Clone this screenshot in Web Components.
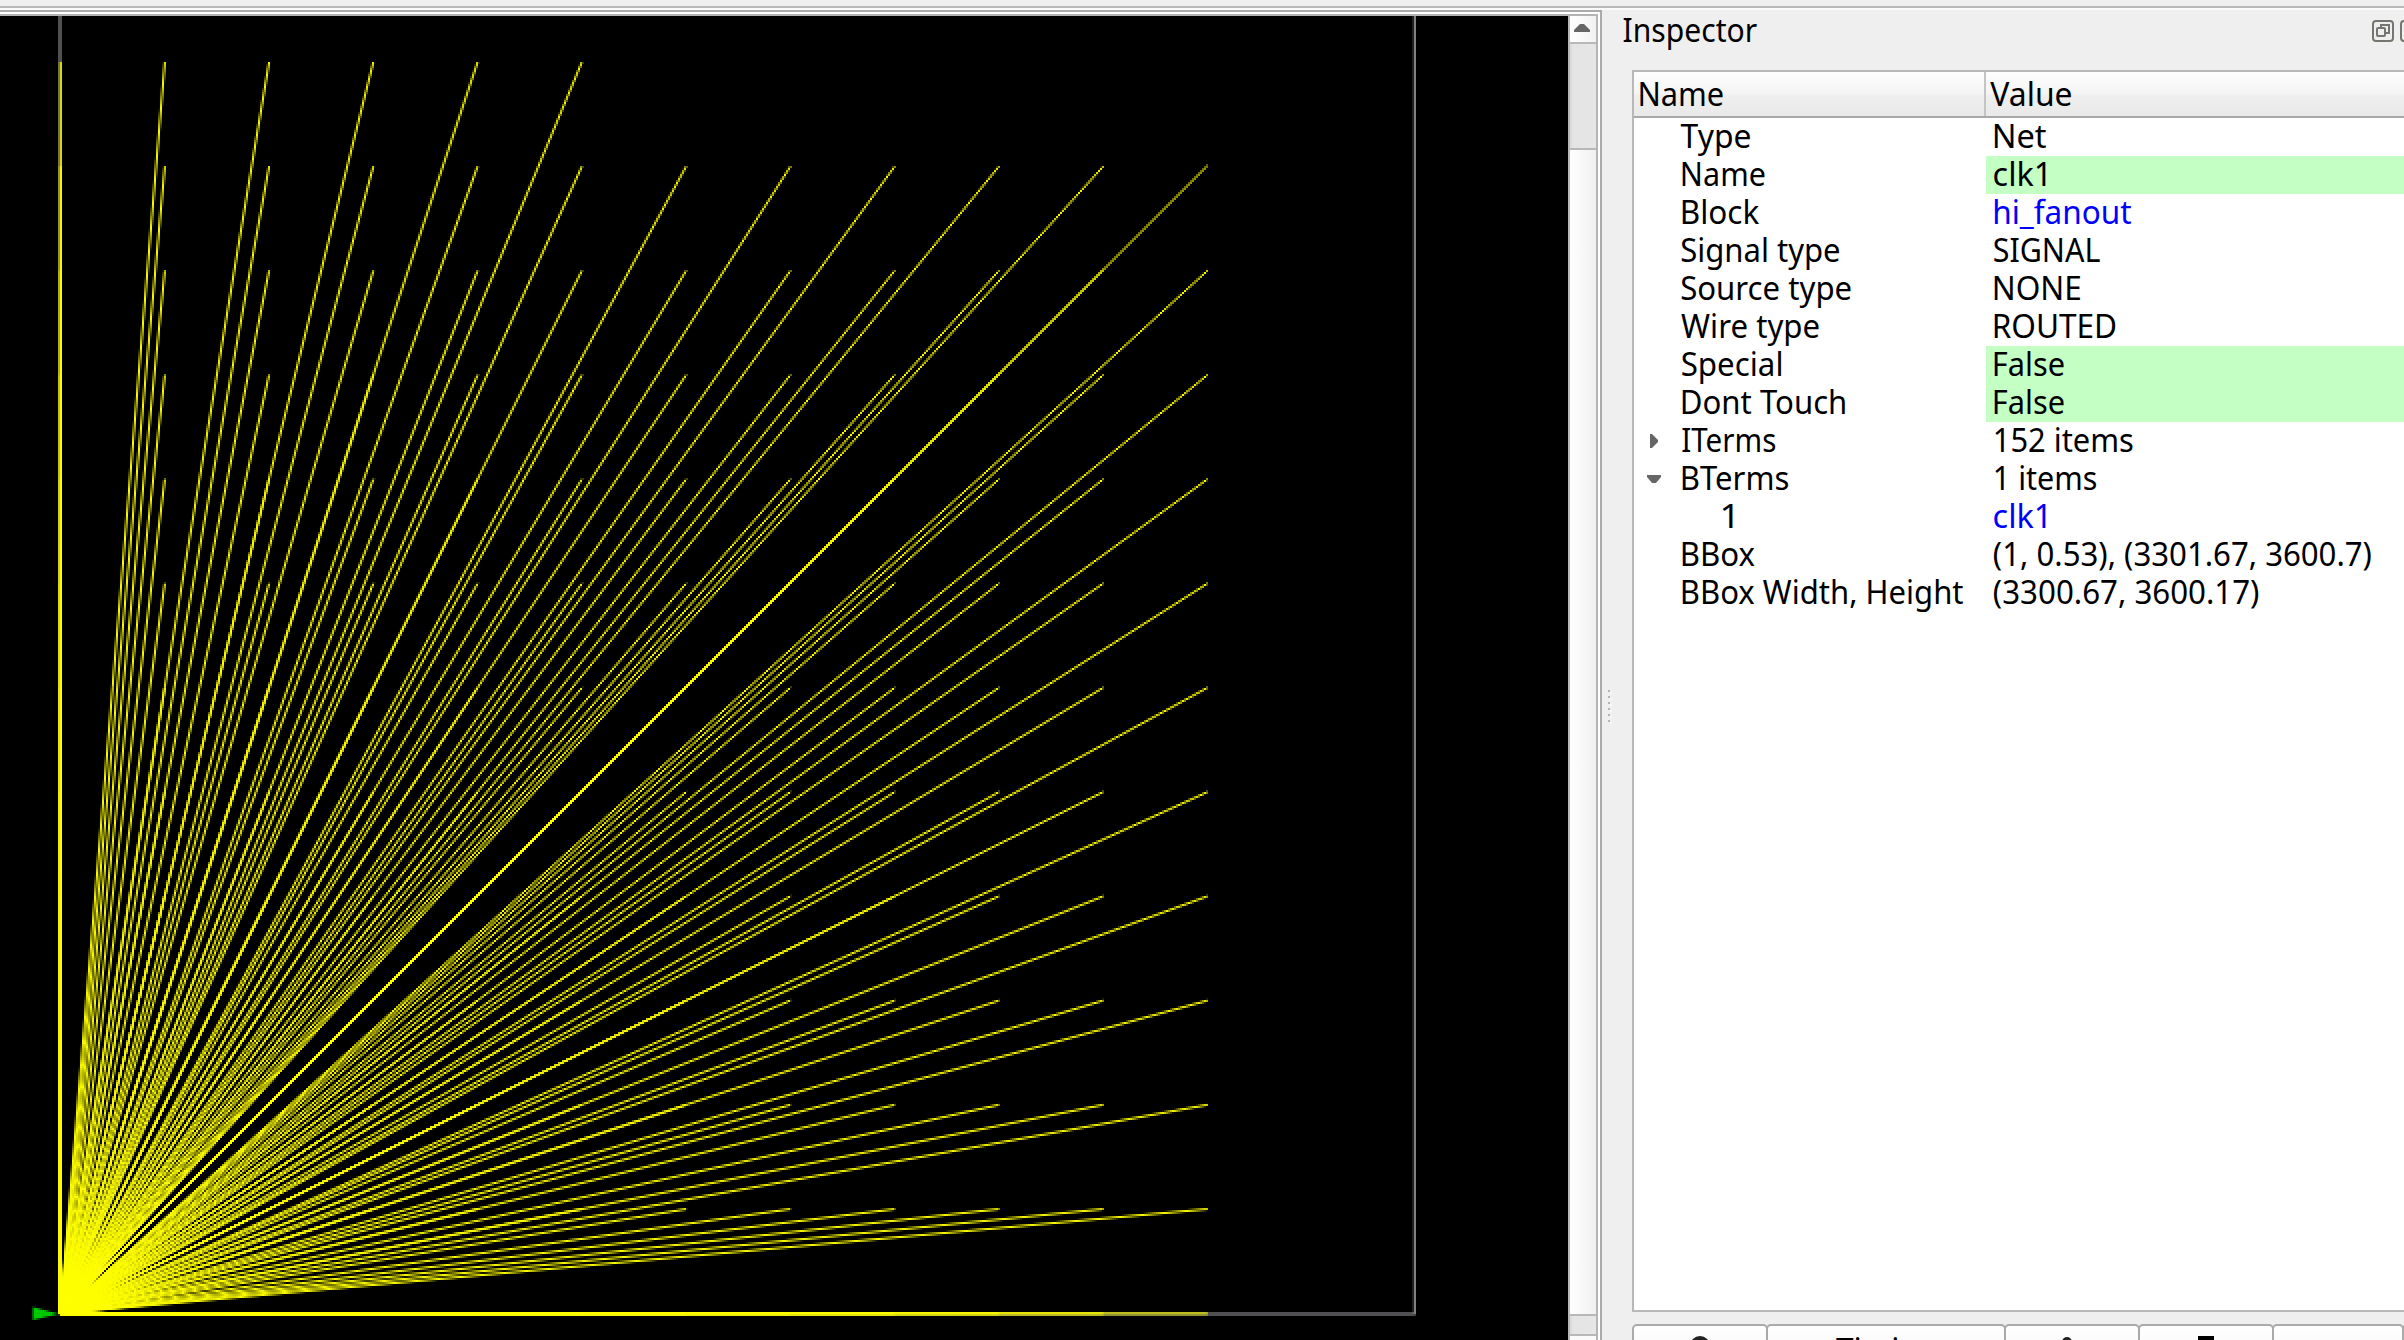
<!DOCTYPE html>
<html lang="en">
<head>
<meta charset="utf-8">
<title>Inspector</title>
<style>
html,body{margin:0;width:2404px;height:1340px;overflow:hidden;background:#efefef;font-family:"Noto Sans","Open Sans",sans-serif}
</style>
</head>
<body>
<app-window></app-window>
<script>
const define = (name, html, setup) => customElements.define(name, class extends HTMLElement {
  connectedCallback() {
    if (this.shadowRoot) return;
    this.attachShadow({ mode: 'open' }).innerHTML = html;
    if (setup) setup(this, this.shadowRoot);
  }
});

// A label condensed to the ink width w, its ink starting dx from the box's left edge.
const meter = document.createElement('canvas').getContext('2d');
define('fit-label', `<style>
:host{display:block;font-size:33px;line-height:36px;height:38px;white-space:pre;color:#000}
span{display:inline-block;transform-origin:0 0}
</style><span></span>`, (el, root) => {
  const span = root.querySelector('span');
  const text = el.getAttribute('text');
  span.textContent = text;
  meter.font = '33px "Noto Sans"';
  const m = meter.measureText(text);
  const s = +el.getAttribute('w') / (m.actualBoundingBoxLeft + m.actualBoundingBoxRight);
  const dx = +(el.getAttribute('dx') || 0) + m.actualBoundingBoxLeft * s;
  span.style.transform = `translateX(${dx}px) scaleX(${s})`;
});

define('layout-canvas', `<style>
:host{display:block;width:1568px;height:1324px;background:#000}
canvas{display:block;width:1568px;height:1324px;image-rendering:pixelated}
</style><canvas width="784" height="662"></canvas>`, (el, root) => {
  const c = root.querySelector('canvas').getContext('2d');
  const k = 0.1738, X = u => 30 + u * k, Y = v => 649 - v * k;
  c.fillStyle = '#000';
  c.fillRect(0, 0, 784, 662);
  c.lineWidth = 1;
  c.strokeStyle = '#a0a0a4';
  c.strokeRect(X(0), -20, X(3897) - X(0), Y(0) + 20);
  c.fillStyle = '#00c800';
  c.beginPath(); c.moveTo(16.5, 645.4); c.lineTo(29.5, 649); c.lineTo(16.5, 652); c.fill();
  c.strokeStyle = '#ff0';
  for (let j = 0; j <= 12; j++)
    for (let i = 0; i < (j === 12 ? 6 : 12); i++) {
      const lift = j === 0 ? 0 : i === j ? 0.6 : 0.2;
      c.beginPath();
      c.moveTo(X(1), Y(0.53) - lift);
      c.lineTo(X(1.67 + 300 * i), Y(0.7 + 300 * j) - lift);
      c.stroke();
    }
});

define('scroll-bar', `<style>
:host{display:flex;flex-direction:column;width:26px;height:1324px;border-left:2px solid #b8b8b8;border-right:2px solid #b4b4b4;background:#e4e4e4}
.up{height:26px;border-bottom:2px solid #b8b8b8;background:linear-gradient(90deg,#fff,#f2f2f2)}
.up svg{display:block}
.groove{height:104px;background:linear-gradient(90deg,#d8d8d8,#e4e4e4 3px,#e6e6e6)}
.handle{height:1164px;border-top:2px solid #b8b8b8;border-bottom:2px solid #b8b8b8;background:linear-gradient(90deg,#fff,#f0f0f0)}
.tail{height:18px;background:linear-gradient(90deg,#d8d8d8,#e4e4e4 3px,#e6e6e6)}
.down{flex:1;border-top:2px solid #b8b8b8;background:#fafafa}
</style><div class="up"><svg width="26" height="26"><path d="M4 16V14L10 8H14L20 14V16Z" fill="#666"/></svg></div><div class="groove"></div><div class="handle"></div><div class="tail"></div><div class="down"></div>`);

define('layout-view', `<style>
:host{display:flex;flex-direction:column;width:1602px;height:1330px}
.outer{border-top:2px solid #aaa;border-right:2px solid #aaa;padding:2px 2px 0 0;background:#fff}
.inner{border-top:2px solid #b4b4b4;display:flex}
</style><div class="outer"><div class="inner"><layout-canvas></layout-canvas><scroll-bar></scroll-bar></div></div>`);

define('split-handle', `<style>
:host{display:flex;flex-direction:column;justify-content:flex-start;gap:4px;box-sizing:border-box;width:18px;padding:680px 0 0 6px;height:1330px}
i{display:block;width:2px;height:2px;background:#b4b4b4;box-shadow:2px 2px #f8f8f8}
</style><i></i><i></i><i></i><i></i><i></i><i></i>`);

define('tree-row', `<style>
:host{display:flex;height:38px}
.n{display:flex;width:352px;height:38px}
.a{width:46px;height:38px}.a svg{display:block}
.v{flex:1;height:38px}
.v.edit{background:#c4ffc4}
</style><div class="n"><div class="a"></div><fit-label></fit-label></div><div class="v"><fit-label></fit-label></div>`, (el, root) => {
  const [n, nl, nr, v, vl, vr, kind, arrow] = el.data;
  const a = root.querySelector('.a');
  if (arrow) a.innerHTML = `<svg width="46" height="38"><path d="${arrow === 'open' ? 'M13 15H27V17L22 23H18L13 17Z' : 'M16 12H18L24 18V20L18 26H16Z'}" fill="#666"/></svg>`;
  const put = (box, text, l, r, base, color) => {
    const f = document.createElement('fit-label');
    f.setAttribute('text', text); f.setAttribute('dx', l - base); f.setAttribute('w', r - l);
    if (color) f.style.color = color;
    box.querySelector('fit-label').replaceWith(f);
  };
  put(root.querySelector('.n'), n, nl, nr, 1679.4);
  put(root.querySelector('.v'), v, vl, vr, 1985.4, kind === 'link' ? '#00f' : '');
  if (kind === 'edit') root.querySelector('.v').classList.add('edit');
});

const rows = [
  ['Type', 1680, 1749.3, 'Net', 1994, 2046],
  ['Name', 1682, 1763.8, 'clk1', 1993, 2045, 'edit'],
  ['Block', 1682, 1759, 'hi_fanout', 1993.5, 2131, 'link'],
  ['Signal type', 1680.5, 1838.5, 'SIGNAL', 1993, 2099.5],
  ['Source type', 1680.5, 1850, 'NONE', 1994, 2080],
  ['Wire type', 1680.5, 1818, 'ROUTED', 1994, 2115.5],
  ['Special', 1681, 1780.5, 'False', 1994, 2063, 'edit'],
  ['Dont Touch', 1682, 1844.5, 'False', 1994, 2063, 'edit'],
  ['ITerms', 1681.5, 1775, '152 items', 1994, 2132.5, '', 'closed'],
  ['BTerms', 1682, 1788, '1 items', 1994, 2096, '', 'open'],
  ['1', 1721, 1732, 'clk1', 1993, 2045, 'link'],
  ['BBox', 1682, 1754, '(1, 0.53), (3301.67, 3600.7)', 1993.2, 2370.5],
  ['BBox Width, Height', 1682, 1963, '(3300.67, 3600.17)', 1993.2, 2258]
];

define('property-tree', `<style>
:host{display:block;height:1238px;flex:none;margin-left:12px;border:2px solid #b8b8b8;border-right:0;background:#fff}
.head{display:flex;height:44px;border-bottom:2px solid #a8a8a8;background:linear-gradient(#fefefe,#f4f4f4 50%,#efefef 52%,#e9e9e9)}
.head div{padding-top:4px;box-sizing:border-box;height:44px}
.head .name{box-sizing:content-box;height:40px;width:350px;border-right:2px solid #c4c4c4}
</style><div class="head"><div class="name"><fit-label text="Name" dx="6.2" w="82.5"></fit-label></div><div><fit-label text="Value" dx="4.3" w="80.7"></fit-label></div></div><section></section>`, (el, root) => {
  for (const r of rows) {
    const row = document.createElement('tree-row');
    row.data = r;
    root.querySelector('section').append(row);
  }
});

define('dock-title', `<style>
:host{display:flex;justify-content:space-between;height:60px;flex:none}
fit-label{margin-top:2px}
svg{display:block;margin-top:8px}
</style><fit-label text="Inspector" dx="3.5" w="134"></fit-label><svg width="34" height="26" fill="none" stroke="#77756f" stroke-width="2"><rect x="3" y="3" width="20" height="20" rx="3"/><path d="M11 10V7H19V15H16"/><rect x="7" y="10" width="8" height="8" rx="1"/><path d="M40 3H34Q31 3 31 6V20Q31 23 34 23H40"/></svg>`);

define('tool-button', `<style>
:host{display:block;box-sizing:border-box;height:40px;flex:none;border:2px solid #aaa;border-radius:5px 5px 0 0;background:linear-gradient(#fff,#f6f6f6);margin-right:-2px}
</style><slot></slot>`);

define('action-bar', `<style>
:host{display:flex;height:16px;overflow:hidden;padding-top:12px;margin-left:12px}
svg{display:block}
fit-label{margin-top:6px}
</style>
<tool-button style="width:136px"><svg width="132" height="30"><circle cx="66" cy="20" r="8" fill="#eee" stroke="#222" stroke-width="4"/></svg></tool-button>
<tool-button style="width:240px"><fit-label text="Timing" dx="68" w="100"></fit-label></tool-button>
<tool-button style="width:136px"><svg width="132" height="30"><circle cx="61" cy="16" r="5" fill="#222"/></svg></tool-button>
<tool-button style="width:136px"><svg width="132" height="30"><path d="M58 10H74V30H58Z" fill="#000"/></svg></tool-button>
<tool-button style="width:132px"></tool-button>
<tool-button style="width:136px"></tool-button>`);

define('inspector-panel', `<style>
:host{display:flex;flex-direction:column;width:784px;flex:none;height:1330px;overflow:hidden}
</style><dock-title></dock-title><property-tree></property-tree><action-bar></action-bar>`);

define('app-window', `<style>
:host{display:flex;flex-direction:column;width:2404px;height:1340px;overflow:hidden;background:#efefef}
.rule{height:2px;border-top:2px solid #b8b8b8;background:#fafafa;margin-top:6px;flex:none}
main{display:flex;height:1330px}
layout-view,split-handle{flex:none}
</style><div class="rule"></div><main><layout-view></layout-view><split-handle></split-handle><inspector-panel></inspector-panel></main>`);
</script>
</body>
</html>
